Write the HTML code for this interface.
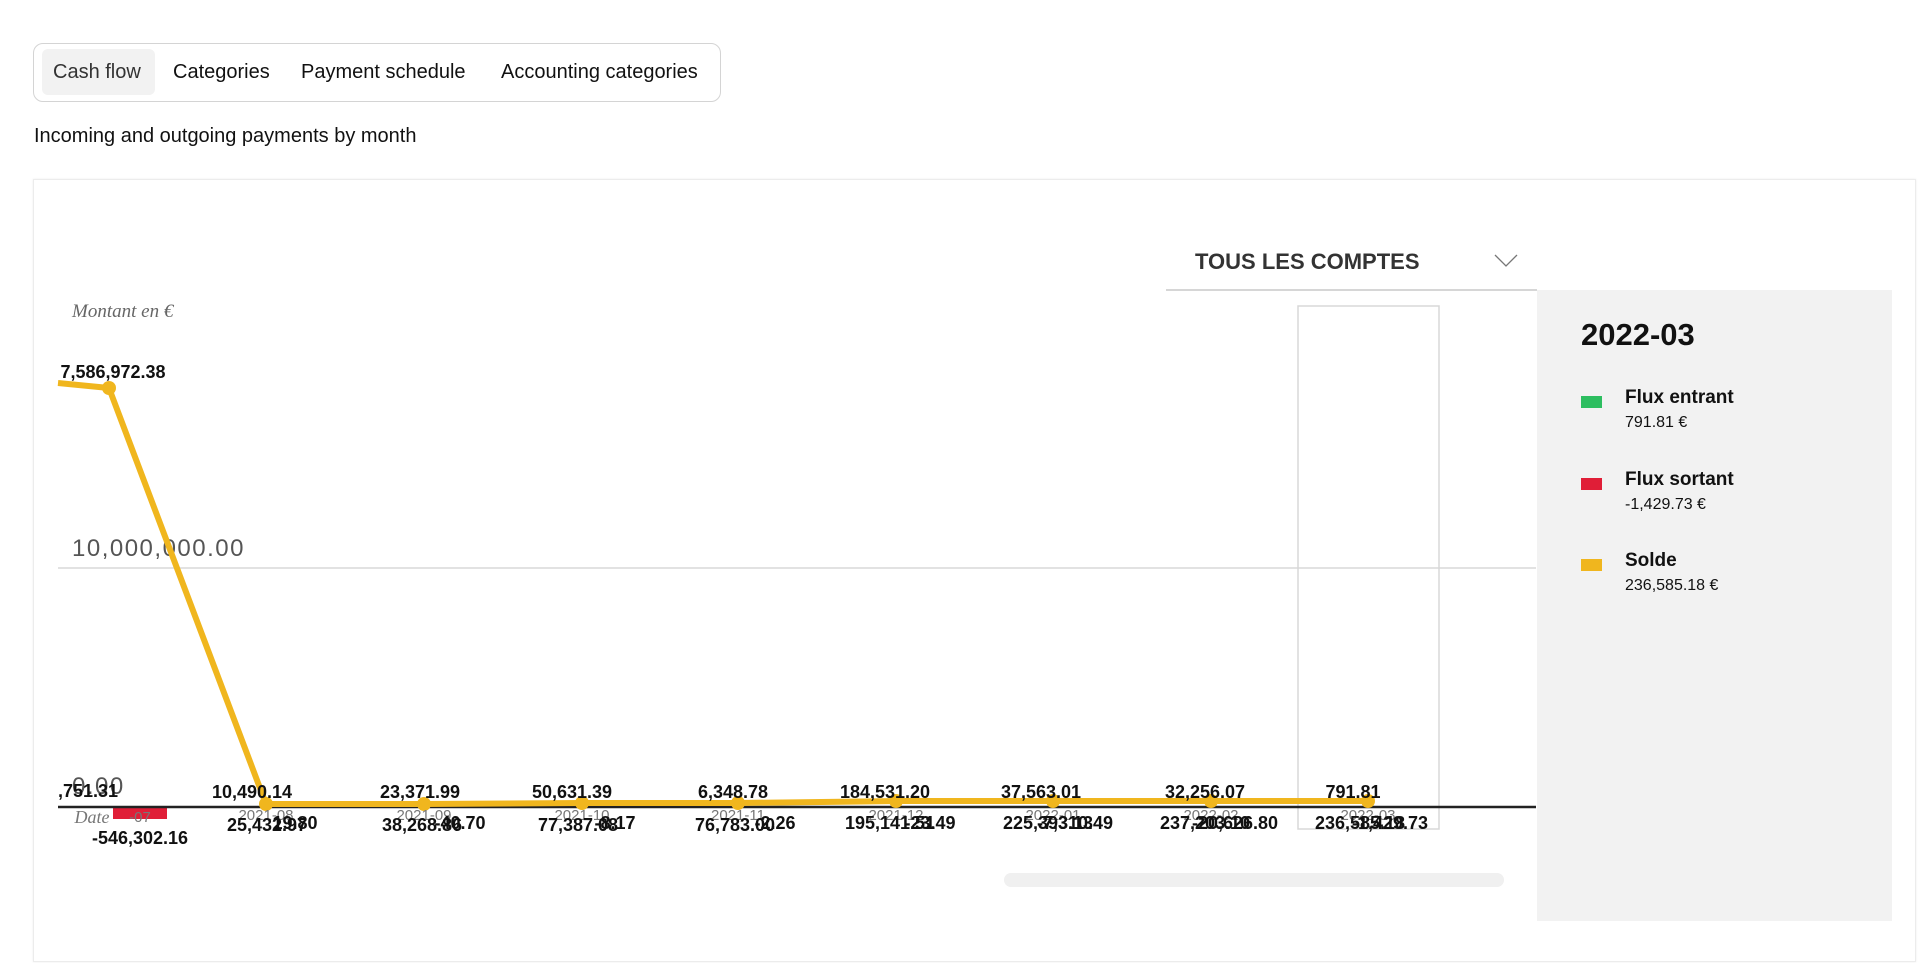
<!DOCTYPE html>
<html><head><meta charset="utf-8"><style>
*{margin:0;padding:0;box-sizing:border-box}
body{width:1920px;height:963px;background:#fff;font-family:"Liberation Sans",sans-serif;color:#111;position:relative;overflow:hidden}
.abs{position:absolute}
.tabs{left:33px;top:43px;width:688px;height:59px;border:1px solid #d4d4d4;border-radius:10px}
.tab{position:absolute;top:0;font-size:20px;line-height:56px;color:#111}
.card{left:33px;top:179px;width:1883px;height:783px;border:1px solid #ececec;box-shadow:0 0 2px rgba(0,0,0,.08)}
.panel{left:1537px;top:290px;width:355px;height:631px;background:#f2f2f2}
.lg{position:absolute;left:44px;font-size:19px;font-weight:bold}
.lv{position:absolute;left:44px;font-size:16px}
.sq{position:absolute;left:0;width:21px;height:12px}
</style></head><body>
<div class="abs tabs">
 <div class="abs" style="left:8px;top:5px;width:113px;height:46px;background:#f2f2f2;border-radius:6px"></div>
 <div class="tab" style="left:19px;color:#333">Cash flow</div>
 <div class="tab" style="left:139px">Categories</div>
 <div class="tab" style="left:267px">Payment schedule</div>
 <div class="tab" style="left:467px">Accounting categories</div>
</div>
<div class="abs" style="left:34px;top:125px;font-size:20px">Incoming and outgoing payments by month</div>
<div class="abs card"></div>
<div class="abs" style="left:1195px;top:249px;font-size:22px;font-weight:bold;color:#333">TOUS LES COMPTES</div>
<svg class="abs" style="left:1494px;top:254px" width="24" height="14"><path d="M1 1 L12 12 L23 1" fill="none" stroke="#777" stroke-width="1.3"/></svg>
<div class="abs" style="left:1166px;top:289px;width:371px;height:2px;background:#d6d6d6"></div>
<div class="abs panel">
 <div class="abs" style="left:44px;top:27px;font-size:31px;font-weight:bold">2022-03</div>
 <div class="abs" style="left:44px;top:99px;width:300px;height:60px">
  <div class="sq" style="top:7px;background:#2dbe60"></div><div class="lg" style="top:-2px">Flux entrant</div><div class="lv" style="top:25px">791.81 €</div></div>
 <div class="abs" style="left:44px;top:181px;width:300px;height:60px">
  <div class="sq" style="top:7px;background:#e01e37"></div><div class="lg" style="top:-2px">Flux sortant</div><div class="lv" style="top:25px">-1,429.73 €</div></div>
 <div class="abs" style="left:44px;top:262px;width:300px;height:60px">
  <div class="sq" style="top:7px;background:#f0b61e"></div><div class="lg" style="top:-2px">Solde</div><div class="lv" style="top:25px">236,585.18 €</div></div>
</div>
<svg class="abs" style="left:0;top:0" width="1537" height="963">
 <rect x="1298" y="306" width="141" height="523" fill="none" stroke="#d8d8d8" stroke-width="1.5"/>
 <line x1="58" y1="568" x2="1536" y2="568" stroke="#d8d8d8" stroke-width="1.5"/>
 <text x="72" y="317" font-family="Liberation Serif,serif" font-style="italic" font-size="19" fill="#666">Montant en €</text>
 <text x="72" y="556" font-size="24" letter-spacing="1.5" fill="#555" font-family="Liberation Sans,sans-serif">10,000,000.00</text>
 <text x="72" y="794" font-size="24" letter-spacing="1.5" fill="#555" font-family="Liberation Sans,sans-serif">0.00</text>
 <rect x="113" y="808" width="54" height="11" fill="#e01e37"/>
 <line x1="58" y1="807" x2="1536" y2="807" stroke="#222" stroke-width="2.5"/>
 <rect x="1004" y="873" width="500" height="14" rx="7" fill="#f0f0f0"/>
 <polyline points="58,383 109,388 266,804 424,804 582,803 738,803 896,801 1053,801 1211,801 1368,801" fill="none" stroke="#f0b61e" stroke-width="6" stroke-linejoin="round"/>
 <g fill="#f0b61e"><circle cx="109" cy="388" r="7"/><circle cx="266" cy="804" r="7"/><circle cx="424" cy="804" r="7"/><circle cx="582" cy="803" r="7"/><circle cx="738" cy="803" r="7"/><circle cx="896" cy="801" r="7"/><circle cx="1053" cy="801" r="7"/><circle cx="1211" cy="801" r="7"/><circle cx="1368" cy="801" r="7"/></g>
 <g font-family="Liberation Sans,sans-serif" font-size="15" fill="#777" text-anchor="middle">
  <text x="92" y="823" font-family="Liberation Serif,serif" font-style="italic" font-size="18">Date</text>
  <text x="140" y="822">-07</text><text x="266" y="820">2021-08</text><text x="424" y="820">2021-09</text><text x="582" y="820">2021-10</text><text x="738" y="820">2021-11</text><text x="896" y="820">2021-12</text><text x="1053" y="820">2022-01</text><text x="1211" y="820">2022-02</text><text x="1368" y="820">2022-03</text>
 </g>
 <g font-family="Liberation Sans,sans-serif" font-size="18" font-weight="bold" fill="#111" text-anchor="middle">
  <text x="113" y="378">7,586,972.38</text>
  <text x="58" y="797" text-anchor="start">,751.31</text>
  <text x="252" y="798">10,490.14</text><text x="420" y="798">23,371.99</text><text x="572" y="798">50,631.39</text><text x="733" y="798">6,348.78</text><text x="885" y="798">184,531.20</text><text x="1041" y="798">37,563.01</text><text x="1205" y="798">32,256.07</text><text x="1353" y="798">791.81</text>
  <text x="140" y="844">-546,302.16</text>
  <text x="267" y="831">25,432.97</text><text x="295" y="829">19.80</text>
  <text x="422" y="831">38,268.86</text><text x="460" y="829">-40.70</text>
  <text x="578" y="831">77,387.08</text><text x="615" y="829">-8.17</text>
  <text x="735" y="831">76,783.00</text><text x="775" y="829">-2.26</text>
  <text x="890" y="829">195,141.51</text><text x="930" y="829">-23.49</text>
  <text x="1048" y="829">225,393.13</text><text x="1075" y="829">-7,310.49</text>
  <text x="1205" y="829">237,203.10</text><text x="1235" y="829">-20,626.80</text>
  <text x="1360" y="829">236,585.18</text><text x="1390" y="829">-1,429.73</text>
 </g>
</svg>
</body></html>
